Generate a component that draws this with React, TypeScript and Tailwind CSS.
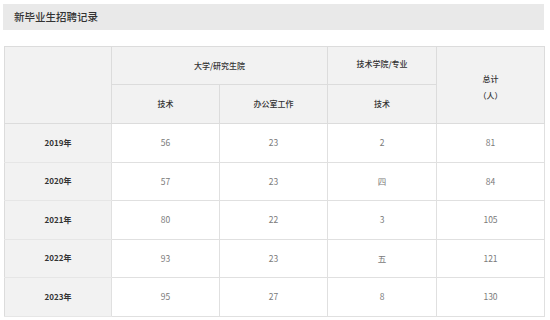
import React from 'react';

interface Row {
  year: string;
  tech: string;
  office: string;
  college: string;
  total: string;
}

const rows: Row[] = [
  { year: '2019年', tech: '56', office: '23', college: '2', total: '81' },
  { year: '2020年', tech: '57', office: '23', college: '四', total: '84' },
  { year: '2021年', tech: '80', office: '22', college: '3', total: '105' },
  { year: '2022年', tech: '93', office: '23', college: '五', total: '121' },
  { year: '2023年', tech: '95', office: '27', college: '8', total: '130' },
];

const font = { fontFamily: '"Noto Sans CJK SC", "Noto Sans", sans-serif' };

export default function App() {
  return (
    <div className="w-[550px] h-[320px] bg-white overflow-hidden" style={font}>
      {/* Title bar */}
      <div className="ml-[3px] mt-[4px] w-[541px] h-[26px] bg-[#e9e9e9] flex items-center pl-[11px]">
        <span className="text-[10.5px] font-medium text-[#333]">新毕业生招聘记录</span>
      </div>

      <table className="ml-[4px] mt-[16px] w-[540px] border-collapse table-fixed border border-[#dcdcdc] text-center">
        <colgroup>
          <col className="w-[107px]" />
          <col className="w-[108px]" />
          <col className="w-[108px]" />
          <col className="w-[109px]" />
          <col className="w-[108px]" />
        </colgroup>
        <thead>
          <tr className="h-[38px]">
            <th rowSpan={2} className="bg-[#f2f2f2] border border-[#dcdcdc]" />
            <th colSpan={2} className="bg-[#f2f2f2] border border-[#dcdcdc] text-[8px] font-medium text-[#333]">
              大学/研究生院
            </th>
            <th className="bg-[#f2f2f2] border border-[#dcdcdc] text-[8px] font-medium text-[#333] pb-[4px]">
              技术学院/专业
            </th>
            <th rowSpan={2} className="bg-[#f2f2f2] border border-[#dcdcdc] text-[8px] font-medium text-[#333] leading-[17px] pt-[3px]">
              总计
              <br />
              （人）
            </th>
          </tr>
          <tr className="h-[39px]">
            <th className="bg-[#f2f2f2] border border-[#dcdcdc] text-[8px] font-medium text-[#333]">技术</th>
            <th className="bg-[#f2f2f2] border border-[#dcdcdc] text-[8px] font-medium text-[#333]">办公室工作</th>
            <th className="bg-[#f2f2f2] border border-[#dcdcdc] text-[8px] font-medium text-[#333]">技术</th>
          </tr>
        </thead>
        <tbody>
          {rows.map((r) => (
            <tr key={r.year} className="h-[38.5px]">
              <td className="bg-[#f2f2f2] border-y border-[#e6e6e6] text-[8px] font-semibold text-[#333]">{r.year}</td>
              <td className="border border-[#e0e0e0] text-[8.5px] text-[#7a7a7a]">{r.tech}</td>
              <td className="border border-[#e0e0e0] text-[8.5px] text-[#7a7a7a]">{r.office}</td>
              <td className="border border-[#e0e0e0] text-[8.5px] text-[#7a7a7a]">{r.college}</td>
              <td className="border border-[#e0e0e0] text-[8.5px] text-[#7a7a7a]">{r.total}</td>
            </tr>
          ))}
        </tbody>
      </table>
    </div>
  );
}
